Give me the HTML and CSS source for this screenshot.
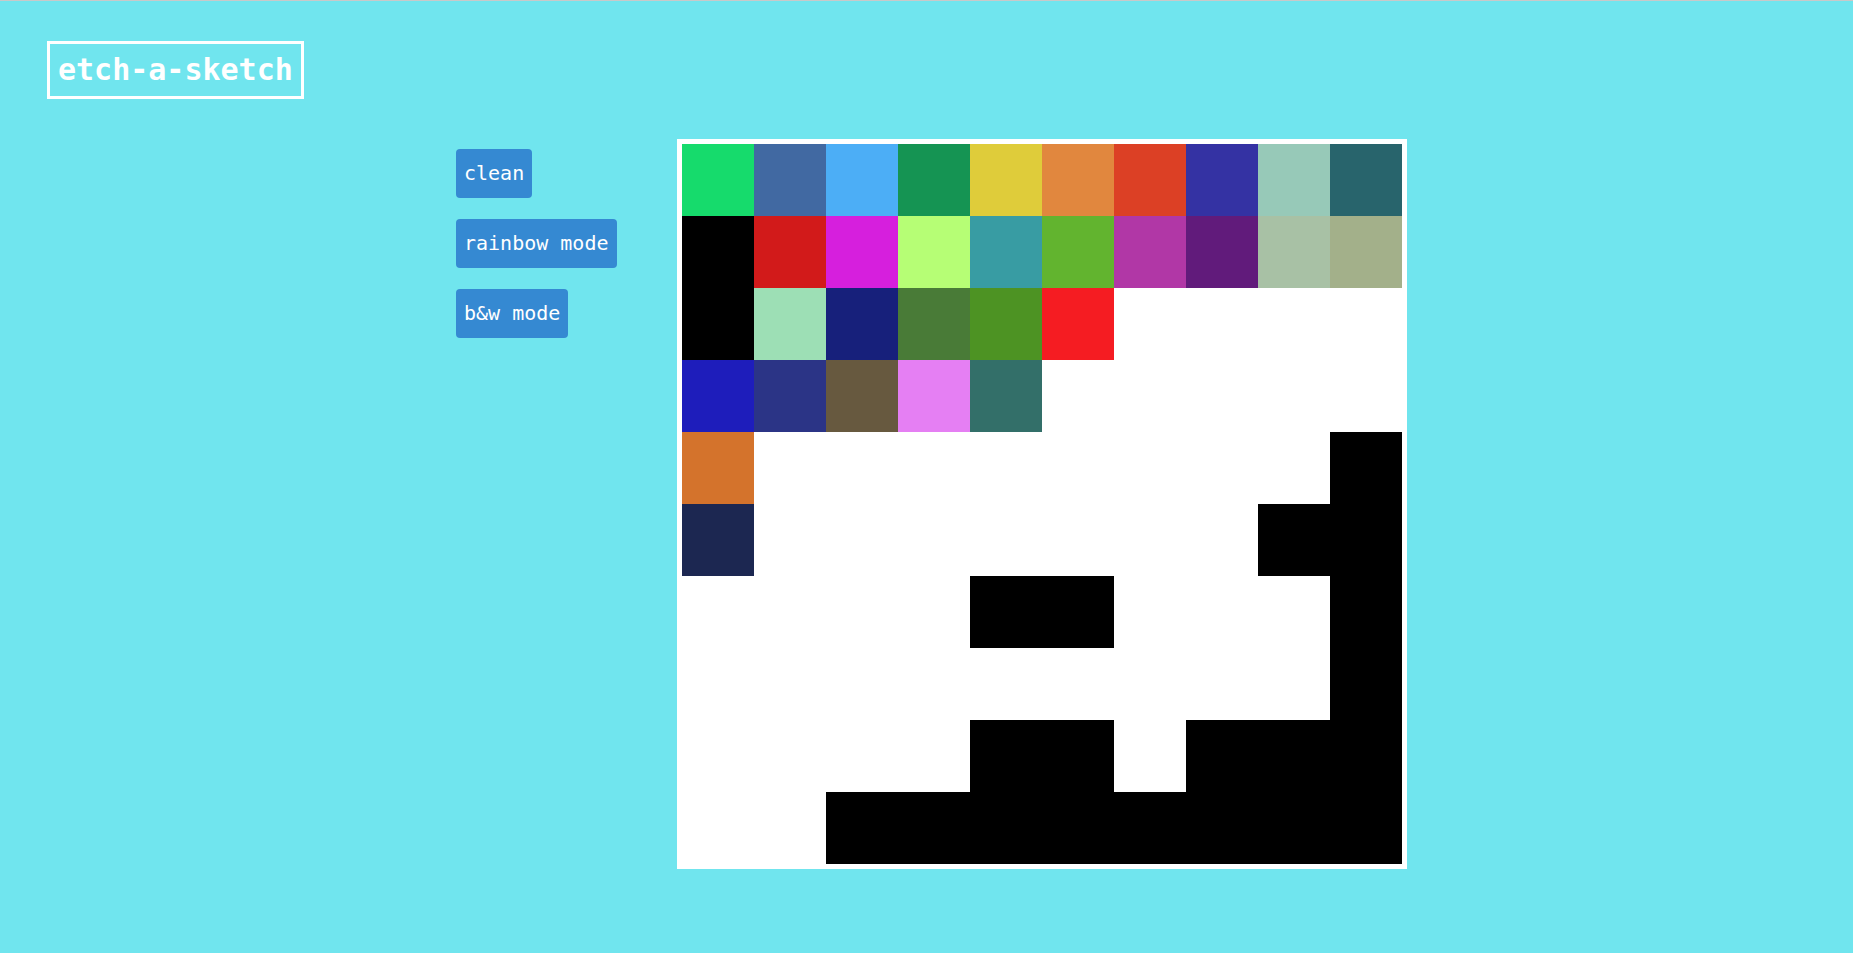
FILE: index.html
```html
<!DOCTYPE html>
<html lang="en">
<head>
<meta charset="utf-8">
<title>etch-a-sketch</title>
<link rel="stylesheet" href="styles.css">
</head>
<body>
<header class="header">
  <h1 class="title">etch-a-sketch</h1>
</header>
<main class="main">
  <div class="controls">
    <button class="btn">clean</button>
    <button class="btn">rainbow mode</button>
    <button class="btn">b&amp;w mode</button>
  </div>
  <div class="board">
    <div class="grid">
      <div class="cell" style="background:#16db6c"></div>
      <div class="cell" style="background:#4169a2"></div>
      <div class="cell" style="background:#4caef6"></div>
      <div class="cell" style="background:#159453"></div>
      <div class="cell" style="background:#dfcc3a"></div>
      <div class="cell" style="background:#e1873e"></div>
      <div class="cell" style="background:#dc4025"></div>
      <div class="cell" style="background:#3432a3"></div>
      <div class="cell" style="background:#97c9b8"></div>
      <div class="cell" style="background:#28646c"></div>

      <div class="cell" style="background:#000000"></div>
      <div class="cell" style="background:#d21a1a"></div>
      <div class="cell" style="background:#d61fdd"></div>
      <div class="cell" style="background:#b6fe75"></div>
      <div class="cell" style="background:#389ca3"></div>
      <div class="cell" style="background:#62b42f"></div>
      <div class="cell" style="background:#b137a6"></div>
      <div class="cell" style="background:#611b7b"></div>
      <div class="cell" style="background:#a8c1a5"></div>
      <div class="cell" style="background:#a3b08a"></div>

      <div class="cell" style="background:#000000"></div>
      <div class="cell" style="background:#9ddfb5"></div>
      <div class="cell" style="background:#17207b"></div>
      <div class="cell" style="background:#497b37"></div>
      <div class="cell" style="background:#4d9323"></div>
      <div class="cell" style="background:#f51c22"></div>
      <div class="cell"></div>
      <div class="cell"></div>
      <div class="cell"></div>
      <div class="cell"></div>

      <div class="cell" style="background:#1e1dbb"></div>
      <div class="cell" style="background:#2b3486"></div>
      <div class="cell" style="background:#67593f"></div>
      <div class="cell" style="background:#e57ff3"></div>
      <div class="cell" style="background:#336f69"></div>
      <div class="cell"></div>
      <div class="cell"></div>
      <div class="cell"></div>
      <div class="cell"></div>
      <div class="cell"></div>

      <div class="cell" style="background:#d4732c"></div>
      <div class="cell"></div>
      <div class="cell"></div>
      <div class="cell"></div>
      <div class="cell"></div>
      <div class="cell"></div>
      <div class="cell"></div>
      <div class="cell"></div>
      <div class="cell"></div>
      <div class="cell black"></div>

      <div class="cell" style="background:#1c2751"></div>
      <div class="cell"></div>
      <div class="cell"></div>
      <div class="cell"></div>
      <div class="cell"></div>
      <div class="cell"></div>
      <div class="cell"></div>
      <div class="cell"></div>
      <div class="cell black"></div>
      <div class="cell black"></div>

      <div class="cell"></div>
      <div class="cell"></div>
      <div class="cell"></div>
      <div class="cell"></div>
      <div class="cell black"></div>
      <div class="cell black"></div>
      <div class="cell"></div>
      <div class="cell"></div>
      <div class="cell"></div>
      <div class="cell black"></div>

      <div class="cell"></div>
      <div class="cell"></div>
      <div class="cell"></div>
      <div class="cell"></div>
      <div class="cell"></div>
      <div class="cell"></div>
      <div class="cell"></div>
      <div class="cell"></div>
      <div class="cell"></div>
      <div class="cell black"></div>

      <div class="cell"></div>
      <div class="cell"></div>
      <div class="cell"></div>
      <div class="cell"></div>
      <div class="cell black"></div>
      <div class="cell black"></div>
      <div class="cell"></div>
      <div class="cell black"></div>
      <div class="cell black"></div>
      <div class="cell black"></div>

      <div class="cell"></div>
      <div class="cell"></div>
      <div class="cell black"></div>
      <div class="cell black"></div>
      <div class="cell black"></div>
      <div class="cell black"></div>
      <div class="cell black"></div>
      <div class="cell black"></div>
      <div class="cell black"></div>
      <div class="cell black"></div>
    </div>
  </div>
</main>
</body>
</html>
```
FILE: styles.css
```css
html, body {
  margin: 0;
  padding: 0;
}

body {
  background: #70e5ee;
  border-top: 1px solid #c9c9c9;
  font-family: "DejaVu Sans Mono", monospace;
  color: #ffffff;
}

.header {
  display: flex;
  padding: 40px 0 0 47px;
}

.title {
  margin: 0;
  border: 3px solid #ffffff;
  padding: 0 8px;
  height: 52px;
  line-height: 52px;
  font-size: 30px;
  font-weight: bold;
  color: #ffffff;
  font-family: "DejaVu Sans Mono", monospace;
}

.main {
  display: flex;
  align-items: flex-start;
  margin-top: 40px;
  padding-left: 456px;
  gap: 60px;
}

.controls {
  display: flex;
  flex-direction: column;
  align-items: flex-start;
  gap: 21px;
  padding-top: 10px;
  width: 161px;
}

.btn {
  font-family: "DejaVu Sans Mono", monospace;
  font-size: 20px;
  color: #ffffff;
  background: #3589d2;
  border: none;
  border-radius: 4px;
  padding: 0 8px;
  height: 49px;
  line-height: 49px;
  cursor: pointer;
}

.board {
  background: #ffffff;
  padding: 5px;
}

.grid {
  display: grid;
  grid-template-columns: repeat(10, 72px);
  grid-template-rows: repeat(10, 72px);
}

.cell {
  background: #ffffff;
}

.cell.black {
  background: #000000;
}
```
